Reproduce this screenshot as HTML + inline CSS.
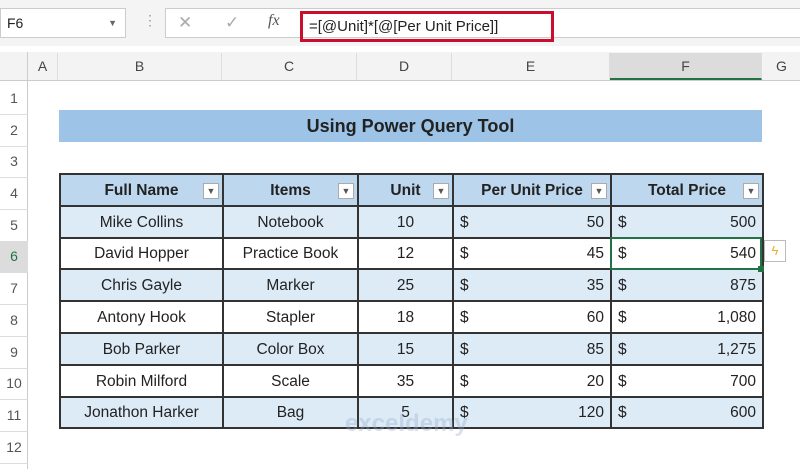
<!DOCTYPE html>
<html><head><style>
*{margin:0;padding:0;box-sizing:border-box}
body{width:800px;height:469px;overflow:hidden;background:#fff;font-family:"Liberation Sans",sans-serif;position:relative;color:#222}
.a{position:absolute}
.rn{position:absolute;left:0;width:28px;text-align:center;font-size:14px;color:#555;border-bottom:1px solid #ddd;line-height:31px}
.ch{position:absolute;top:53px;height:27px;line-height:27px;text-align:center;font-size:14px;color:#444;border-right:1px solid #ddd}
table{position:absolute;left:59px;top:173px;border-collapse:collapse;font-size:15.5px}
td{border:2px solid #333;height:31.8px;padding:2px 6px 0;white-space:nowrap}
tr.h td{background:#bdd7ee;font-weight:bold;text-align:center;position:relative}
tr.b td{background:#ddebf7}
.c{text-align:center}
.dd{position:absolute;right:3px;top:8px;width:16px;height:16px;border:1px solid #aaa;background:#fff;font-size:9px;line-height:14px;text-align:center;font-weight:normal;color:#555}
.m{display:flex;justify-content:space-between}
</style></head><body>
<div class="a" style="left:0;top:0;width:800px;height:46px;background:#f4f4f4"></div>
<div class="a" style="left:0;top:8px;width:126px;height:30px;background:#fff;border:1px solid #ccc;font-size:14px;line-height:28px;padding-left:6px">F6<span style="position:absolute;right:8px;font-size:9px;color:#666">▼</span></div>
<div class="a" style="left:143px;top:12px;font-size:14px;color:#999">⋮</div>
<div class="a" style="left:165px;top:8px;width:640px;height:30px;background:#fff;border:1px solid #ccc"></div>
<div class="a" style="left:178px;top:13px;font-size:17px;color:#aaa">✕</div>
<div class="a" style="left:225px;top:13px;font-size:17px;color:#aaa">✓</div>
<div class="a" style="left:268px;top:12px;font-size:16px;font-style:italic;font-family:'Liberation Serif',serif;color:#555">fx</div>
<div class="a" style="left:300px;top:11px;width:254px;height:31px;border:3px solid #c8102e;font-size:15px;line-height:25px;padding-left:6px">=[@Unit]*[@[Per Unit Price]]</div>
<div class="a" style="left:0;top:52px;width:800px;height:29px;background:#f3f3f3;border-bottom:1px solid #ccc"></div>
<div class="ch" style="left:28px;width:30px">A</div>
<div class="ch" style="left:58px;width:164px">B</div>
<div class="ch" style="left:222px;width:135px">C</div>
<div class="ch" style="left:357px;width:95px">D</div>
<div class="ch" style="left:452px;width:158px">E</div>
<div class="ch" style="left:610px;width:152px;background:#dcdcdc;border-bottom:2px solid #217346">F</div>
<div class="ch" style="left:762px;width:40px">G</div>
<div class="a" style="left:27px;top:52px;width:1px;height:417px;background:#ccc"></div>
<div class="rn" style="top:83px">1</div><div class="rn" style="top:115px">2</div><div class="rn" style="top:146px">3</div><div class="rn" style="top:178px">4</div><div class="rn" style="top:210px">5</div><div class="rn" style="top:241px;background:#dcdcdc;color:#217346">6</div><div class="rn" style="top:273px">7</div><div class="rn" style="top:305px">8</div><div class="rn" style="top:337px">9</div><div class="rn" style="top:368px">10</div><div class="rn" style="top:400px">11</div><div class="rn" style="top:432px">12</div>
<div class="a" style="left:59px;top:110px;width:703px;height:32px;background:#9dc3e6;font-weight:bold;font-size:18px;text-align:center;line-height:32px">Using Power Query Tool</div>
<table>
<colgroup><col style="width:163px"><col style="width:135px"><col style="width:95px"><col style="width:158px"><col style="width:152px"></colgroup>
<tr class="h"><td>Full Name<span class="dd">▼</span></td><td>Items<span class="dd">▼</span></td><td>Unit<span class="dd">▼</span></td><td>Per Unit Price<span class="dd">▼</span></td><td>Total Price<span class="dd">▼</span></td></tr>
<tr class="b"><td class="c">Mike Collins</td><td class="c">Notebook</td><td class="c">10</td><td><div class="m"><span>$</span><span>50</span></div></td><td><div class="m"><span>$</span><span>500</span></div></td></tr>
<tr><td class="c">David Hopper</td><td class="c">Practice Book</td><td class="c">12</td><td><div class="m"><span>$</span><span>45</span></div></td><td><div class="m"><span>$</span><span>540</span></div></td></tr>
<tr class="b"><td class="c">Chris Gayle</td><td class="c">Marker</td><td class="c">25</td><td><div class="m"><span>$</span><span>35</span></div></td><td><div class="m"><span>$</span><span>875</span></div></td></tr>
<tr><td class="c">Antony Hook</td><td class="c">Stapler</td><td class="c">18</td><td><div class="m"><span>$</span><span>60</span></div></td><td><div class="m"><span>$</span><span>1,080</span></div></td></tr>
<tr class="b"><td class="c">Bob Parker</td><td class="c">Color Box</td><td class="c">15</td><td><div class="m"><span>$</span><span>85</span></div></td><td><div class="m"><span>$</span><span>1,275</span></div></td></tr>
<tr><td class="c">Robin Milford</td><td class="c">Scale</td><td class="c">35</td><td><div class="m"><span>$</span><span>20</span></div></td><td><div class="m"><span>$</span><span>700</span></div></td></tr>
<tr class="b"><td class="c">Jonathon Harker</td><td class="c">Bag</td><td class="c">5</td><td><div class="m"><span>$</span><span>120</span></div></td><td><div class="m"><span>$</span><span>600</span></div></td></tr>
</table>
<div class="a" style="left:610px;top:237px;width:152px;height:33px;border:2px solid #217346"></div>
<div class="a" style="left:758px;top:266px;width:6px;height:6px;background:#217346"></div>
<div class="a" style="left:764px;top:240px;width:22px;height:22px;border:1px solid #bbb;background:#fff;color:#e8b030;font-size:13px;text-align:center;line-height:20px">ϟ</div>
<div class="a" style="left:345px;top:410px;font-size:24px;color:rgba(150,170,200,0.35);font-weight:bold">exceldemy</div>
</body></html>
